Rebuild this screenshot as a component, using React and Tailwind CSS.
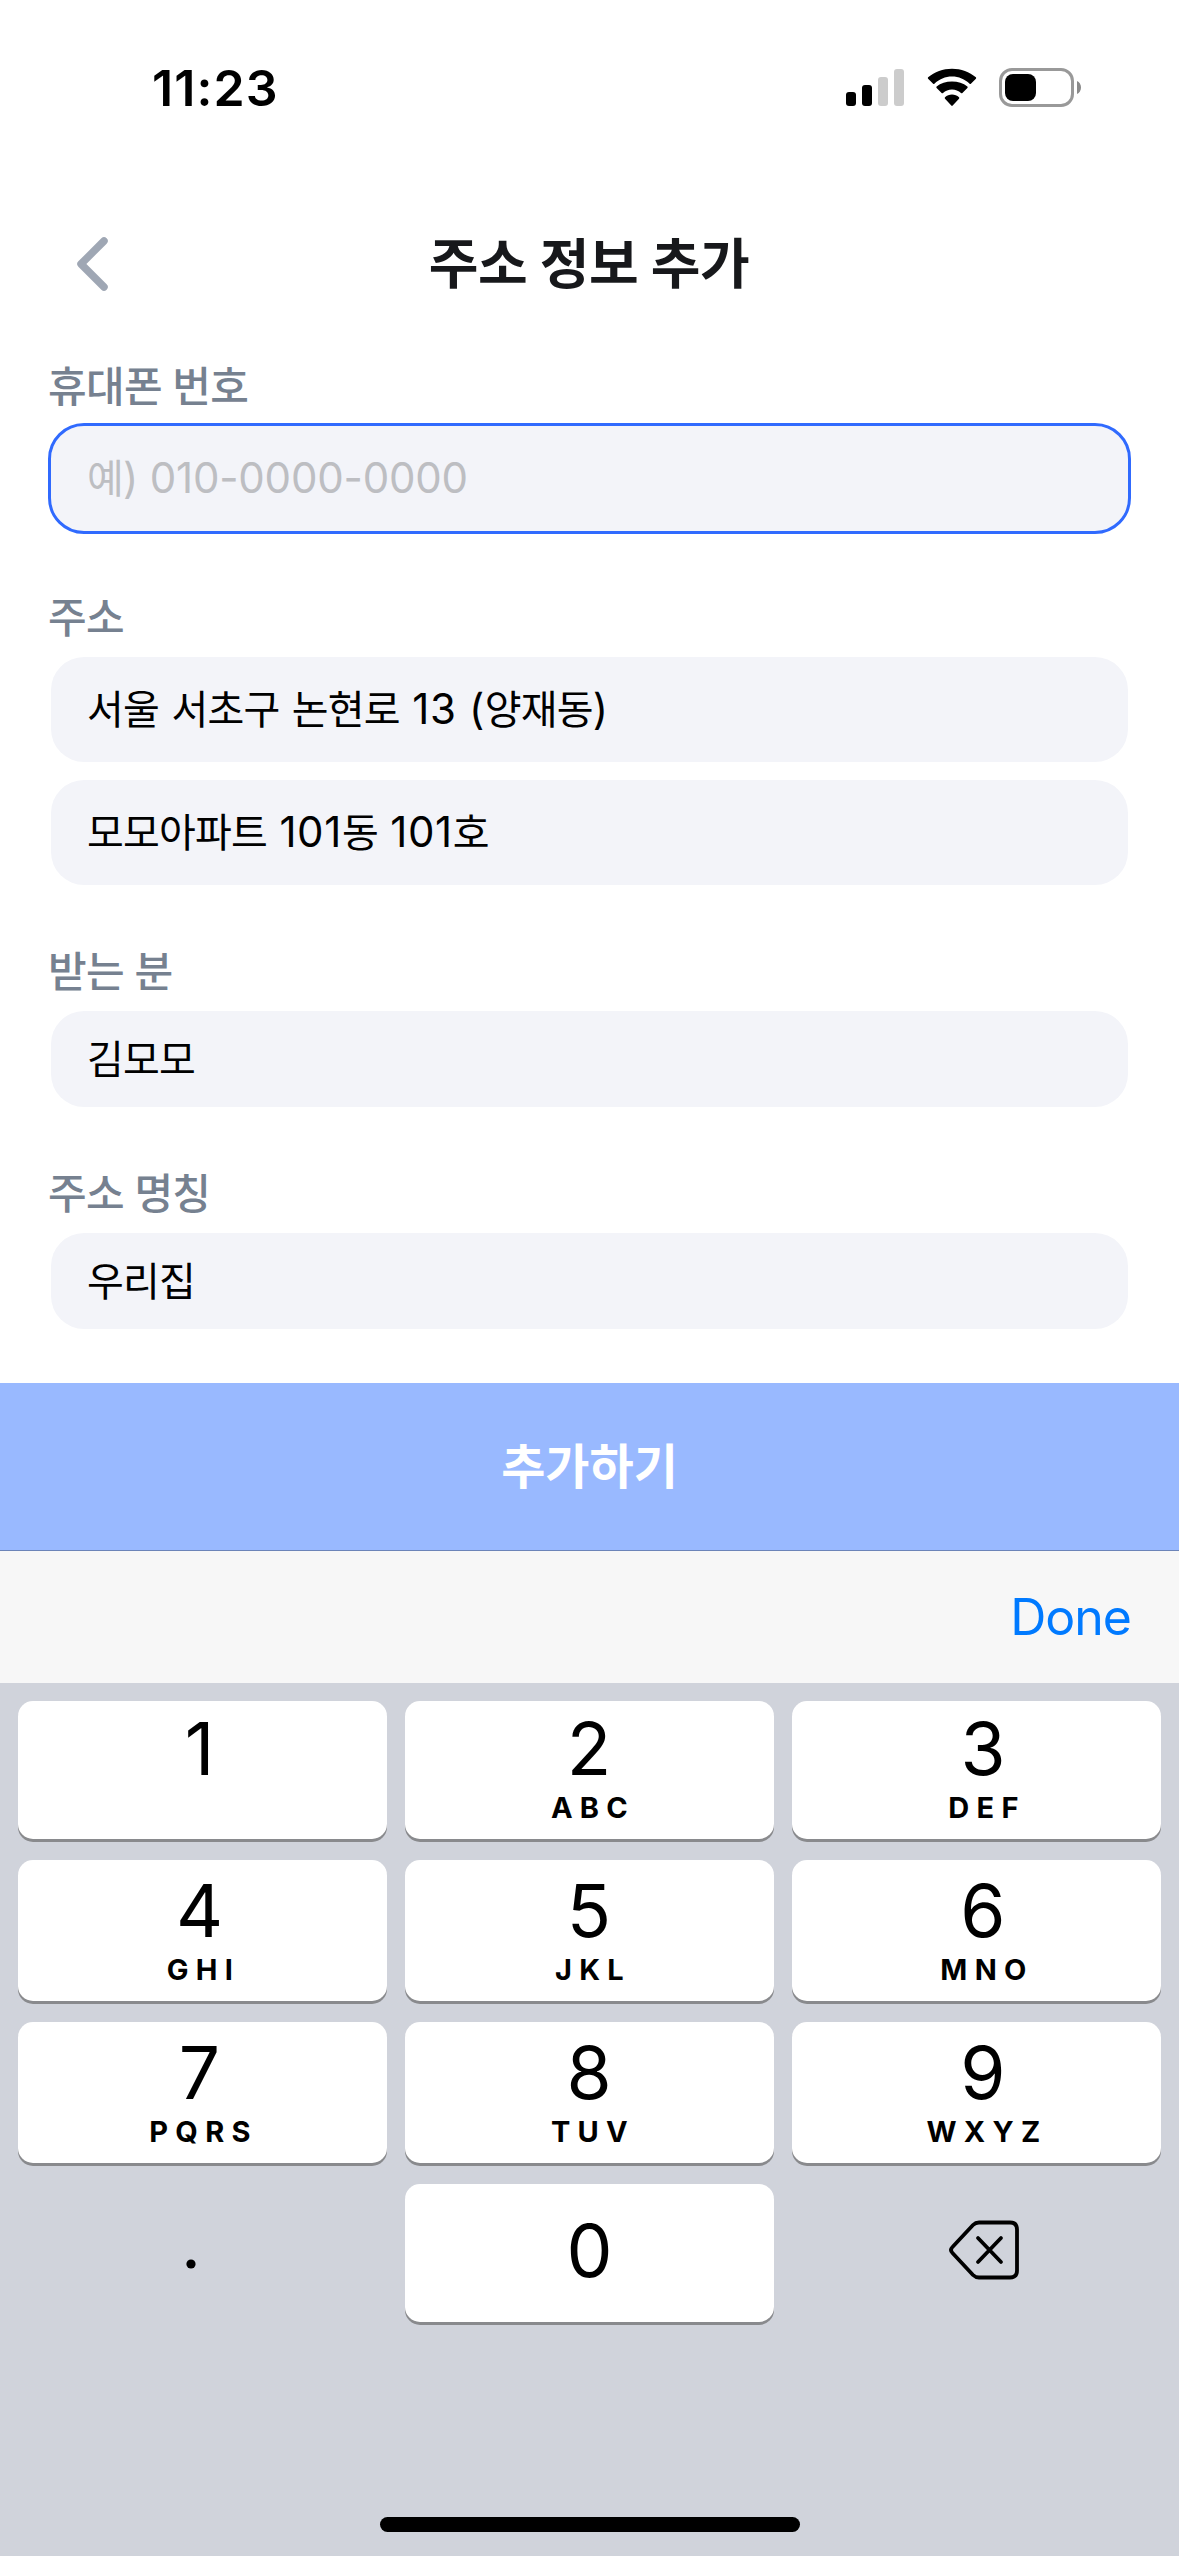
import clsx from "clsx";

const KEYS = [
  [
    { digit: "1", letters: "" },
    { digit: "2", letters: "ABC" },
    { digit: "3", letters: "DEF" },
  ],
  [
    { digit: "4", letters: "GHI" },
    { digit: "5", letters: "JKL" },
    { digit: "6", letters: "MNO" },
  ],
  [
    { digit: "7", letters: "PQRS" },
    { digit: "8", letters: "TUV" },
    { digit: "9", letters: "WXYZ" },
  ],
];

const StatusBar = () => (
  <div className="flex h-[176px] items-start justify-between pl-[152px] pr-[96px]">
    <span className="mt-[58px] text-[50px] font-semibold leading-[60px] tracking-[1.1px] text-black">
      11:23
    </span>
    <div className="mt-[68px] flex h-[39px] items-start">
      <svg width="60" height="39" viewBox="0 0 60 39">
        <rect x="1" y="24" width="10" height="14" rx="3" fill="#000" />
        <rect x="17" y="17" width="10" height="21" rx="3" fill="#000" />
        <rect x="33" y="9" width="10" height="29" rx="3" fill="#ccc" />
        <rect x="49" y="1" width="10" height="37" rx="3" fill="#ccc" />
      </svg>
      <svg className="ml-[21px]" width="52" height="39" viewBox="0 0 52 39">
        <path
          d="M26 8.600c6.700 0 12.900 2.600 17.600 7.200.4.400.9.400 1.300 0l5-5.100c.4-.4.4-1 0-1.400C43.500 3.900 35 .7 26 .7S8.500 3.900 2.100 9.300c-.4.4-.4 1 0 1.400l5 5.100c.4.4.9.4 1.300 0C13.100 11.200 19.300 8.600 26 8.600z"
          fill="#000"
        />
        <path
          d="M26 21.400c3.500 0 6.600 1.300 9 3.500.4.400 1 .4 1.400 0l5-5c.4-.4.4-1 0-1.400C37.300 15 31.900 13.500 26 13.500S14.700 15 10.600 18.500c-.4.4-.4 1 0 1.400l5 5c.4.4 1 .4 1.400 0 2.400-2.200 5.500-3.500 9-3.500z"
          fill="#000"
        />
        <path
          d="M33 30.700c.4-.4.4-1 0-1.400C31.100 27.500 28.700 26.500 26 26.500s-5.100 1-7 2.800c-.4.4-.4 1 0 1.400l6.300 6.900c.4.4 1 .4 1.400 0z"
          fill="#000"
        />
      </svg>
      <svg className="ml-[20px]" width="85" height="39" viewBox="0 0 85 39">
        <rect x="2.500" y="1.500" width="72" height="36" rx="11.500" fill="none" stroke="#999" strokeWidth="3" />
        <rect x="7" y="6" width="31" height="27" rx="8" fill="#000" />
        <path d="M79 13c2.500 1.200 4 3.600 4 6.500s-1.500 5.300-4 6.500z" fill="#8a8a8a" />
      </svg>
    </div>
  </div>
);

const Header = () => (
  <div className="grid h-[176px] grid-cols-[1fr_auto_1fr] items-center">
    <button className="pl-[74px]" aria-label="back">
      <svg className="block" width="36" height="56" viewBox="0 0 36 56">
        <path
          d="M30 5 L7 28 L30 51"
          fill="none"
          stroke="#9fa7b4"
          strokeWidth="7.500"
          strokeLinecap="round"
          strokeLinejoin="round"
        />
      </svg>
    </button>
    <h1 className="pr-[1px] pt-[1px] text-[54px] font-bold leading-[80px] tracking-[-0.4px] text-[#17181b]">
      주소 정보 추가
    </h1>
    <span />
  </div>
);

// Hangul is drawn a little tighter than the latin text beside it
const MixedText = ({ text }) =>
  text.split(/([가-힣]+)/).map((part, i) =>
    /[가-힣]/.test(part) ? (
      <span key={i} className="text-[40px] tracking-[-0.8px]">
        {part}
      </span>
    ) : (
      <span key={i}>{part}</span>
    )
  );

const Label = ({ children }) => (
  <div className="flex h-[60px] items-center pt-[2px] text-[42px] font-medium leading-[60px] tracking-[-0.7px] text-[#768190]">
    {children}
  </div>
);

const Field = ({ text, focused, placeholder, small }) => (
  <div
    className={clsx(
      "flex items-center whitespace-pre rounded-[36px] border-[3px] bg-[#f3f4f9] bg-clip-padding pl-[36px] text-[42px] leading-[60px]",
      focused ? "border-[#306afe]" : "border-transparent",
      placeholder ? "tracking-[-0.2px] text-[#bdbec2]" : "tracking-[0.6px] text-black",
      small ? "h-[102px]" : "h-[111px]"
    )}
  >
    <span>
      <MixedText text={text} />
    </span>
  </div>
);

const Key = ({ digit, letters, column, tall }) => (
  <button
    className={clsx(
      "flex flex-col items-center rounded-[15px] bg-white text-black shadow-[0_3px_0_#898a8d]",
      column === 0 && "pr-[6px]",
      column === 1 && "pr-[1px]",
      column === 2 && "pl-[13px]",
      tall ? "h-[141px] pt-[7px]" : "h-[138px] pt-[4px]"
    )}
  >
    <span className="text-[73px] leading-[88px]">{digit}</span>
    <span className="-mt-[3px] pl-[8px] text-[29px] font-bold leading-[36px] tracking-[7.3px]">{letters}</span>
  </button>
);

const Keyboard = () => (
  <div className="flex flex-1 flex-col items-center bg-[#d0d3db] pt-[18px]">
    <div className="flex w-full flex-col gap-[21px] px-[18px]">
      {KEYS.map((row, r) => (
        <div key={r} className="grid grid-cols-3 gap-[18px]">
          {row.map((key, c) => (
            <Key key={key.digit} {...key} column={c} tall={r > 0} />
          ))}
        </div>
      ))}
      <div className="grid grid-cols-3 gap-[18px]">
        <div className="flex h-[138px] items-center pl-[167px]">
          <svg width="12" height="12" viewBox="0 0 12 12" className="mt-[21px]">
            <circle cx="6" cy="6" r="4.600" fill="#000" />
          </svg>
        </div>
        <button className="flex h-[138px] items-center justify-center rounded-[15px] bg-white pb-[4px] text-[73px] leading-[88px] text-black shadow-[0_3px_0_#898a8d]">
          0
        </button>
        <div className="flex h-[138px] items-center justify-center pl-[14px]">
          <svg width="72" height="60" viewBox="0 0 72 60" className="-mt-[6px]">
            <path
              d="M31 3H62Q69 3 69 10V51Q69 58 62 58H31Q27.500 58 25 55.500L4.500 33.500Q1.500 30.500 4.500 27.500L25 5.500Q27.500 3 31 3Z"
              transform="translate(0 -0.500)"
              fill="none"
              stroke="#000"
              strokeWidth="3.800"
            />
            <path d="M30 18L53 42M53 18L30 42" stroke="#000" strokeWidth="3.800" strokeLinecap="round" />
          </svg>
        </div>
      </div>
    </div>
    <div className="mb-[24px] mt-auto h-[15px] w-[420px] rounded-full bg-black" />
  </div>
);

const App = () => {
  return (
    <div className="flex h-[2556px] w-[1179px] flex-col overflow-hidden bg-white font-['Inter','Noto_Sans_CJK_KR',sans-serif]">
      <StatusBar />
      <Header />

      {/* Address form */}
      <div className="flex h-[1031px] flex-col px-[48px] pt-[4px]">
        <Label>휴대폰 번호</Label>
        <div className="mt-[7px]">
          <Field text="예) 010-0000-0000" focused placeholder />
        </div>

        <div className="mt-[53px]">
          <Label>주소</Label>
          <div className="mt-[7px] flex flex-col gap-[12px]">
            <Field text="서울 서초구 논현로 13 (양재동)" />
            <Field text="모모아파트 101동 101호" />
          </div>
        </div>

        <div className="mt-[53px]">
          <Label>받는 분</Label>
          <div className="mt-[7px]">
            <Field text="김모모" small />
          </div>
        </div>

        <div className="mt-[53px]">
          <Label>주소 명칭</Label>
          <div className="mt-[7px]">
            <Field text="우리집" small />
          </div>
        </div>
      </div>

      {/* Submit */}
      <button className="flex h-[168px] items-center justify-center border-b border-[#6c84b8] bg-[#99b9ff] text-[48px] font-bold text-white">
        추가하기
      </button>

      {/* Keyboard toolbar */}
      <div className="flex h-[132px] items-center justify-end bg-[#f7f7f7] pr-[48px] text-[50px] tracking-[-1px] text-[#007aff]">
        Done
      </div>
      <Keyboard />
    </div>
  );
};

export default App;
